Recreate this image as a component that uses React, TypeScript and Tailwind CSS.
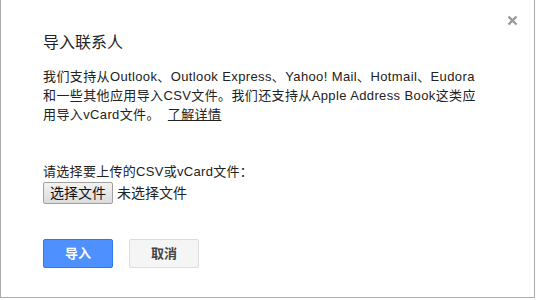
export default function App() {
  return (
    <div className="w-[536px] h-[300px] bg-white overflow-hidden">
      <div
        className="relative w-[535px] h-[298px] border border-t-0 border-[#acacac] bg-white pl-[42px] pt-[31px] text-[#222]"
        style={{ fontFamily: '"Liberation Sans", Arial, "Noto Sans CJK SC", sans-serif' }}
      >
        {/* close */}
        <button className="absolute right-[16px] top-[14px] w-[12px] h-[12px] flex items-center justify-center">
          <svg width="11" height="11" viewBox="0 0 11 11">
            <path d="M1.5 1.5 L9.5 9.5 M9.5 1.5 L1.5 9.5" stroke="#9a9a9a" strokeWidth="2.4" />
          </svg>
        </button>

        <h1 className="text-[16px] leading-[24px] font-normal">导入联系人</h1>

        <p className="mt-[12px] whitespace-nowrap text-[13px] tracking-[0.38px] leading-[19px]">
          我们支持从Outlook、Outlook Express、Yahoo! Mail、Hotmail、Eudora
          <br />
          和一些其他应用导入CSV文件。我们还支持从Apple Address Book这类应
          <br />
          用导入vCard文件。{" "}
          <a className="ml-[4px] underline cursor-pointer">了解详情</a>
        </p>

        <div className="mt-[38px] text-[13px] tracking-[0.3px] leading-[19px]">请选择要上传的CSV或vCard文件：</div>
        <div className="mt-[1px] flex items-center gap-[4px] text-[13px]">
          <button className="w-[70px] h-[22px] border border-[#a0a0a0] rounded-[2px] bg-gradient-to-b from-[#f2f2f2] to-[#dcdcdc] text-[14px] leading-[20px] text-[#111]">
            选择文件
          </button>
          <span className="text-[14px]">未选择文件</span>
        </div>

        <div className="mt-[35px] flex gap-[16px]">
          <button className="w-[70px] h-[29px] rounded-[2px] border border-[#3079ed] bg-[#4d90fe] text-white text-[13px] font-bold">
            导入
          </button>
          <button className="w-[70px] h-[29px] rounded-[2px] border border-[#dcdcdc] bg-[#f5f5f5] text-[#444] text-[13px] font-bold">
            取消
          </button>
        </div>
      </div>
    </div>
  );
}
